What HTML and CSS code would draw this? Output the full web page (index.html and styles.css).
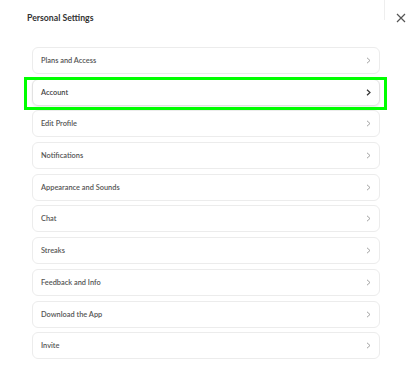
FILE: index.html
```html
<!DOCTYPE html>
<html lang="en">
  <head>
    <meta charset="utf-8">
    <meta name="viewport" content="width=device-width,initial-scale=1.0">
    <title>Personal Settings</title>
    <link rel="stylesheet" href="styles.css">
  </head>
  <body>
    <div class="header">
      <div class="title">Personal Settings</div>
      <div class="divider"></div>
      <div class="close">
        <svg width="10" height="10" viewBox="0 0 10 10">
          <path d="M1 1 L9 9 M9 1 L1 9" stroke="#555" stroke-width="1.2" fill="none"/>
        </svg>
      </div>
    </div>

    <div class="menu">
      <div class="item">
        <span>Plans and Access</span>
        <svg class="chevron" width="5" height="7" viewBox="0 0 5 7"><path d="M1 0.8 L4 3.5 L1 6.2" /></svg>
      </div>
      <div class="item active">
        <span>Account</span>
        <svg class="chevron" width="5" height="7" viewBox="0 0 5 7"><path d="M1 0.8 L4 3.5 L1 6.2" /></svg>
      </div>
      <div class="item">
        <span>Edit Profile</span>
        <svg class="chevron" width="5" height="7" viewBox="0 0 5 7"><path d="M1 0.8 L4 3.5 L1 6.2" /></svg>
      </div>
      <div class="item">
        <span>Notifications</span>
        <svg class="chevron" width="5" height="7" viewBox="0 0 5 7"><path d="M1 0.8 L4 3.5 L1 6.2" /></svg>
      </div>
      <div class="item">
        <span>Appearance and Sounds</span>
        <svg class="chevron" width="5" height="7" viewBox="0 0 5 7"><path d="M1 0.8 L4 3.5 L1 6.2" /></svg>
      </div>
      <div class="item">
        <span>Chat</span>
        <svg class="chevron" width="5" height="7" viewBox="0 0 5 7"><path d="M1 0.8 L4 3.5 L1 6.2" /></svg>
      </div>
      <div class="item">
        <span>Streaks</span>
        <svg class="chevron" width="5" height="7" viewBox="0 0 5 7"><path d="M1 0.8 L4 3.5 L1 6.2" /></svg>
      </div>
      <div class="item">
        <span>Feedback and Info</span>
        <svg class="chevron" width="5" height="7" viewBox="0 0 5 7"><path d="M1 0.8 L4 3.5 L1 6.2" /></svg>
      </div>
      <div class="item">
        <span>Download the App</span>
        <svg class="chevron" width="5" height="7" viewBox="0 0 5 7"><path d="M1 0.8 L4 3.5 L1 6.2" /></svg>
      </div>
      <div class="item">
        <span>Invite</span>
        <svg class="chevron" width="5" height="7" viewBox="0 0 5 7"><path d="M1 0.8 L4 3.5 L1 6.2" /></svg>
      </div>
    </div>
  </body>
</html>
```

FILE: styles.css
```css
body {
  margin: 0;
  background-color: #ffffff;
  font-family: Lato, "Open Sans", sans-serif;
  color: #555;
}
.header {
  display: flex;
  align-items: flex-start;
  height: 47px;
  padding-left: 27px;
}
.title {
  flex: 1;
  margin-top: 12px;
  font-weight: 700;
  font-size: 8.7px;
  color: #333;
}
.divider {
  width: 1px;
  height: 20px;
  background-color: #eeeeee;
}
.close {
  width: 10px;
  height: 10px;
  margin: 7px 6px 0 11px;
}
.menu {
  display: flex;
  flex-direction: column;
  gap: 4.7px;
  margin-left: 32px;
  width: 348px;
}
.item {
  position: relative;
  display: flex;
  align-items: center;
  justify-content: space-between;
  box-sizing: border-box;
  height: 27px;
  padding: 0 8px 0 8px;
  border: 1px solid #ececec;
  border-radius: 6px;
  font-size: 7.4px;
  font-weight: 600;
}
.chevron path {
  fill: none;
  stroke: #999;
  stroke-width: 0.9;
}
.active {
  border-color: #e2e2e2;
  box-shadow: 0 1px 2px rgba(0, 0, 0, 0.08);
  color: #444;
}
.active .chevron path {
  stroke: #333;
  stroke-width: 1.2;
}
.active::after {
  content: "";
  position: absolute;
  top: -3px;
  bottom: -5px;
  left: -9px;
  right: -8px;
  border: 3px solid #00ff00;
}
```
